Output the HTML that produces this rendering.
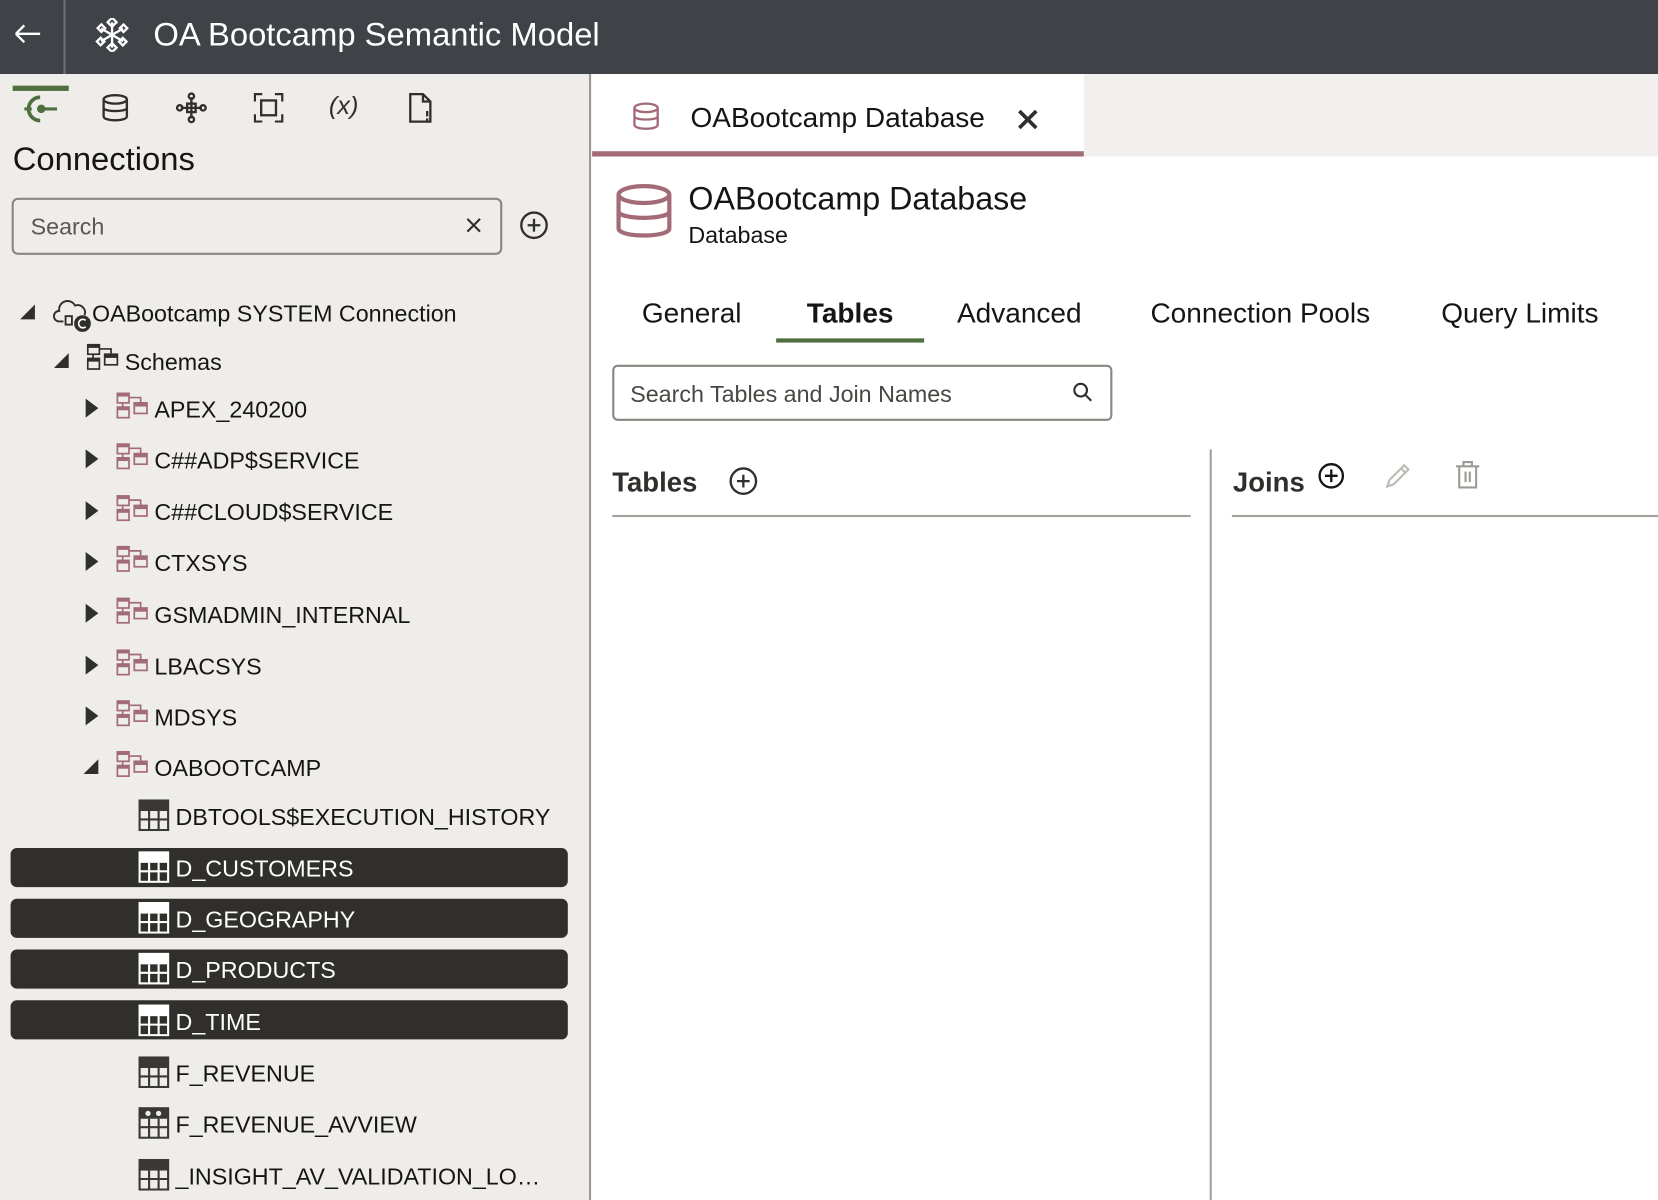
<!DOCTYPE html>
<html><head><meta charset="utf-8"><style>
html,body{margin:0;padding:0;width:1658px;height:1200px;overflow:hidden;background:#fff}
#w{position:absolute;left:0;top:0;width:1568px;height:1135px;transform:scale(1.05740);transform-origin:0 0;font-family:"Liberation Sans",sans-serif;color:#161513}
.a{position:absolute}
.top{left:0;top:0;width:1568px;height:70px;background:#3f4247}
.side{left:0;top:70px;width:557px;height:1065px;background:#eeedea;border-right:2px solid #9e9a93}
.t{position:absolute;font-size:22px;white-space:nowrap;line-height:30px;margin-top:2px}
.sel{position:absolute;left:10px;width:527px;height:37px;background:#312f2c;border-radius:6px}
.tab{position:absolute;top:281px;font-size:26.5px;color:#161513;white-space:nowrap}
</style></head><body><div id="w">
<svg width="0" height="0" style="position:absolute"><defs>
<g id="sch"><rect x="1" y="1" width="11" height="9" fill="none" stroke="currentColor" stroke-width="1.6"/><rect x="1" y="1" width="11" height="3" fill="currentColor"/><rect x="1" y="14" width="11" height="10" fill="none" stroke="currentColor" stroke-width="1.6"/><rect x="1" y="14" width="11" height="3" fill="currentColor"/><rect x="17" y="10" width="12" height="10" fill="none" stroke="currentColor" stroke-width="1.6"/><rect x="17" y="10" width="12" height="3.5" fill="currentColor"/><path d="M12 5H23V10M6 10V14" fill="none" stroke="currentColor" stroke-width="1.6"/></g>
<g id="tbl"><rect x="1" y="1" width="27" height="28" fill="none" stroke="currentColor" stroke-width="2"/><rect x="1" y="1" width="27" height="10" fill="currentColor"/><path d="M1 19H28M10 11V29M19 11V29" stroke="currentColor" stroke-width="2"/></g>
</defs></svg>
<div class="a top">
<svg class="a" style="left:12px;top:20px" width="28" height="24"><path d="M3 12H26M3 12L11 4M3 12L11 20" stroke="#fff" stroke-width="2.2" fill="none"/></svg>
<div class="a" style="left:60px;top:0;width:2px;height:70px;background:#6d6f73"></div>
<svg class="a" style="left:90px;top:17px" width="32" height="32" stroke="#fff" stroke-width="2.2" fill="none"><path d="M16 4V28M5.6 10L26.4 22M5.6 22L26.4 10"/><rect x="13" y="1" width="6" height="6" transform="rotate(45 16 4)"/><rect x="13" y="25" width="6" height="6" transform="rotate(45 16 28)"/><rect x="3" y="7" width="5" height="5" transform="rotate(45 5.6 10)"/><rect x="24" y="20" width="5" height="5" transform="rotate(45 26.4 22)"/><rect x="3" y="20" width="5" height="5" transform="rotate(45 5.6 22)"/><rect x="24" y="7" width="5" height="5" transform="rotate(45 26.4 10)"/></svg>
<div class="a" style="left:145px;top:15px;font-size:31px;color:#fff">OA Bootcamp Semantic Model</div>
</div>
<div class="a side"></div>
<div class="a" style="left:12px;top:81px;width:53px;height:5px;background:#4f6f3e"></div>
<svg class="a" style="left:20px;top:88px" width="34" height="30"><path d="M18 4A11 11 0 1 0 18 26" stroke="#4f6f3e" stroke-width="3.5" fill="none"/><circle cx="19" cy="15" r="4" fill="#4f6f3e"/><path d="M19 15H34" stroke="#4f6f3e" stroke-width="3"/><path d="M3 15H10" stroke="#4f6f3e" stroke-width="3"/></svg>
<svg class="a" style="left:95px;top:88px" width="28" height="28" stroke="#312f2c" stroke-width="2.2" fill="none"><ellipse cx="14" cy="6" rx="11" ry="4"/><path d="M3 6V22C3 27 25 27 25 22V6M3 14C3 18 25 18 25 14"/></svg>
<svg class="a" style="left:166px;top:87px" width="30" height="30" stroke="#312f2c" stroke-width="2.2" fill="none"><path d="M15 5V25M5 15H25"/><circle cx="15" cy="4" r="2.5"/><circle cx="15" cy="26" r="2.5"/><circle cx="4" cy="15" r="2.5"/><circle cx="26" cy="15" r="2.5"/><rect x="11" y="11" width="8" height="8"/></svg>
<svg class="a" style="left:240px;top:88px" width="28" height="28" stroke="#312f2c" stroke-width="2.2" fill="none"><path d="M1 8V1H8M20 1H27V8M27 20V27H20M8 27H1V20"/><rect x="7" y="7" width="14" height="14"/></svg>
<div class="a" style="left:311px;top:87px;font-size:24px;font-style:italic;color:#312f2c">(x)</div>
<svg class="a" style="left:386px;top:87px" width="24" height="30" stroke="#312f2c" stroke-width="2.2" fill="none"><path d="M2 2H14L21 9V28H2Z M14 2V9H21"/><path d="M18 18V23M18 25V27"/></svg>
<div class="a" style="left:12px;top:133px;font-size:31px">Connections</div>
<div class="a" style="left:11px;top:187px;width:460px;height:50px;border:2px solid #8a8680;border-radius:6px;background:#eeedea"></div>
<div class="a" style="left:29px;top:202px;font-size:22px;color:#5b5752">Search</div>
<svg class="a" style="left:440px;top:205px" width="16" height="16"><path d="M2 2L14 14M14 2L2 14" stroke="#312f2c" stroke-width="2"/></svg>
<svg class="a" style="left:491px;top:199px" width="28" height="28" stroke="#312f2c" stroke-width="2.2" fill="none"><circle cx="14" cy="14" r="12"/><path d="M14 8V20M8 14H20"/></svg>

<svg class="a" style="left:17px;top:286px" width="18" height="18"><path d="M16 2V16H2Z" fill="#312f2c"/></svg>
<svg class="a" style="left:50px;top:280px" width="38" height="34" stroke="#312f2c" stroke-width="1.8" fill="none"><path d="M10 24H6A5 5 0 0 1 6 14A8 8 0 0 1 21 9A7 7 0 0 1 30 18"/><circle cx="28" cy="26" r="7" fill="#312f2c"/><path d="M31 23A4 4 0 1 0 31 29" stroke="#fff" stroke-width="1.6"/><rect x="12" y="19" width="6" height="8"/></svg>
<div class="t" style="left:87px;top:280px">OABootcamp SYSTEM Connection</div>
<svg class="a" style="left:49px;top:332px" width="18" height="18"><path d="M16 2V16H2Z" fill="#312f2c"/></svg>
<svg class="a" style="left:82px;top:325px;color:#312f2c" width="32" height="30"><use href="#sch"/></svg>
<div class="t" style="left:118px;top:326px">Schemas</div>

<div class="sel" style="top:802px"></div>
<div class="sel" style="top:850px"></div>
<div class="sel" style="top:898px"></div>
<div class="sel" style="top:946px"></div>

<div id="rows"></div>

<div class="a" style="left:559px;top:70px;width:1009px;height:78px;background:#f1f0ee"></div>
<div class="a" style="left:560px;top:70px;width:465px;height:73px;background:#fff;border-bottom:5px solid #a36a77"></div>
<svg class="a" style="left:597px;top:96px" width="28" height="28" stroke="#a36a77" stroke-width="2.2" fill="none"><ellipse cx="14" cy="6" rx="11" ry="4"/><path d="M3 6V22C3 27 25 27 25 22V6M3 14C3 18 25 18 25 14"/></svg>
<div class="a" style="left:653px;top:96px;font-size:26.5px">OABootcamp Database</div>
<svg class="a" style="left:962px;top:103px" width="20" height="20"><path d="M2 2L18 18M18 2L2 18" stroke="#312f2c" stroke-width="3.5"/></svg>
<svg class="a" style="left:582px;top:173px" width="54" height="54" stroke="#a36a77" stroke-width="4" fill="none"><ellipse cx="27" cy="11" rx="24" ry="8"/><path d="M3 11V43C3 52 51 52 51 43V11M3 27C3 35 51 35 51 27"/></svg>
<div class="a" style="left:651px;top:171px;font-size:30.5px">OABootcamp Database</div>
<div class="a" style="left:651px;top:210px;font-size:22px">Database</div>

<div class="tab" style="left:607px">General</div>
<div class="tab" style="left:763px;font-weight:bold">Tables</div>
<div class="a" style="left:734px;top:320px;width:140px;height:4px;background:#4f6f3e"></div>
<div class="tab" style="left:905px">Advanced</div>
<div class="tab" style="left:1088px">Connection Pools</div>
<div class="tab" style="left:1363px">Query Limits</div>

<div class="a" style="left:579px;top:345px;width:469px;height:49px;border:2px solid #8a8680;border-radius:5px"></div>
<div class="a" style="left:596px;top:360px;font-size:22px;color:#4a4743">Search Tables and Join Names</div>
<svg class="a" style="left:1014px;top:361px" width="20" height="20" stroke="#312f2c" stroke-width="2" fill="none"><circle cx="8" cy="8" r="6"/><path d="M12.5 12.5L18 18"/></svg>

<div class="a" style="left:579px;top:441px;font-size:26px;font-weight:bold;color:#312f2c">Tables</div>
<svg class="a" style="left:689px;top:441px" width="28" height="28" stroke="#312f2c" stroke-width="2.2" fill="none"><circle cx="14" cy="14" r="12"/><path d="M14 8V20M8 14H20"/></svg>
<div class="a" style="left:579px;top:487px;width:547px;height:2px;background:#a5a09a"></div>
<div class="a" style="left:1144px;top:425px;width:2px;height:710px;background:#a5a09a"></div>
<div class="a" style="left:1166px;top:441px;font-size:26px;font-weight:bold;color:#312f2c">Joins</div>
<svg class="a" style="left:1246px;top:437px" width="26" height="26" stroke="#161513" stroke-width="2.2" fill="none"><circle cx="13" cy="13" r="11"/><path d="M13 7V19M7 13H19"/></svg>
<svg class="a" style="left:1308px;top:436px" width="28" height="28" stroke="#bdbab5" stroke-width="2" fill="none"><path d="M4 24L6 18L20 4L24 8L10 22Z M17 7L21 11"/></svg>
<svg class="a" style="left:1375px;top:435px" width="26" height="28" stroke="#9e9a95" stroke-width="2" fill="none"><path d="M2 6H24M9 6V2H17V6M5 6V26H21V6M11 11V21M15 11V21"/></svg>
<div class="a" style="left:1165px;top:487px;width:403px;height:2px;background:#a5a09a"></div>
</div>
<script>
var r=document.getElementById('rows'),h='';
var sch=[['APEX_240200',386,0],['C##ADP$SERVICE',434,0],['C##CLOUD$SERVICE',483,0],['CTXSYS',531,0],['GSMADMIN_INTERNAL',580,0],['LBACSYS',629,0],['MDSYS',677,0],['OABOOTCAMP',725,1]];
sch.forEach(function(s){var y=s[1];
h+=s[2]?'<svg class="a" style="left:77px;top:'+(y-9)+'px" width="18" height="18"><path d="M16 2V16H2Z" fill="#312f2c"/></svg>':'<svg class="a" style="left:80px;top:'+(y-10)+'px" width="14" height="20"><path d="M1 1L13 10L1 19Z" fill="#312f2c"/></svg>';
h+='<svg class="a" style="left:110px;top:'+(y-15)+'px;color:#a36a77" width="32" height="30"><use href="#sch"/></svg><div class="t" style="left:146px;top:'+(y-15)+'px">'+s[0]+'</div>';});
var tb=[['DBTOOLS$EXECUTION_HISTORY',771,0],['D_CUSTOMERS',820,1],['D_GEOGRAPHY',868,1],['D_PRODUCTS',916,1],['D_TIME',965,1],['F_REVENUE',1014,0],['F_REVENUE_AVVIEW',1062,2],['_INSIGHT_AV_VALIDATION_LO…',1111,0]];
tb.forEach(function(t){var y=t[1],c=t[2]==1?'#fff':'#3a3835';
var ic=t[2]==2?'<svg class="a" style="left:131px;top:'+(y-15)+'px" width="30" height="30"><rect x="1" y="1" width="27" height="28" fill="none" stroke="'+c+'" stroke-width="2"/><rect x="1" y="1" width="27" height="10" fill="'+c+'"/><circle cx="9" cy="6" r="3" fill="#eee" stroke="'+c+'"/><circle cx="19" cy="6" r="3" fill="#eee" stroke="'+c+'"/><path d="M1 19H28M10 11V29M19 11V29" stroke="'+c+'" stroke-width="2"/></svg>':'<svg class="a" style="left:131px;top:'+(y-15)+'px;color:'+c+'" width="30" height="30"><use href="#tbl"/></svg>';
h+=ic+'<div class="t" style="left:166px;top:'+(y-15)+'px;color:'+(t[2]==1?'#fff':'#161513')+'">'+t[0]+'</div>';});
r.innerHTML=h;
</script>
</body></html>
